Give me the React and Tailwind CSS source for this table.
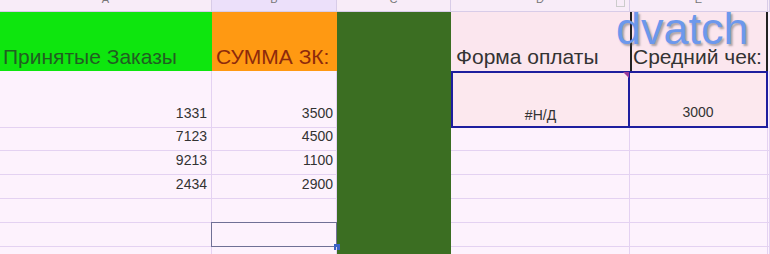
const COLS = ['w-[212px]', 'w-[125px]', 'w-[114px]', 'w-[179px]', 'w-[138px]', 'flex-1'];

const numbers = [
  ['1331', '3500'],
  ['7123', '4500'],
  ['9213', '1100'],
  ['2434', '2900'],
];

const Cell = ({ className = '', children }) => (
  <div className={`flex shrink-0 items-end border-b border-r border-[#e4d2f2] ${className}`}>{children}</div>
);

const PlainRow = ({ height, a, b, selected }) => (
  <div className={`flex ${height}`}>
    <Cell className={`${COLS[0]} justify-end pb-[3px] pr-[4px] text-[14px] text-[#333]`}>{a}</Cell>
    <Cell className={`${COLS[1]} relative justify-end pb-[3px] pr-[3px] text-[14px] text-[#333]`}>
      {b}
      {selected && (
        <>
          <div className="absolute inset-[-1px] border-[1.5px] border-[#707096]" />
          <div className="absolute bottom-[-4px] right-[-4px] h-[6px] w-[6px] bg-[#3b62c4]" />
        </>
      )}
    </Cell>
    <div className={`${COLS[2]} shrink-0 bg-[#3b6e22]`} />
    <Cell className={COLS[3]} />
    <Cell className={COLS[4]} />
    <Cell className={COLS[5]} />
  </div>
);

export default function App() {
  return (
    <div
      className="relative h-[254px] w-[770px] overflow-hidden bg-[#fdf2fd]"
      style={{ fontFamily: '"Liberation Sans", Arial, sans-serif' }}
    >
      {/* column letters, cut off at the top */}
      <div className="flex h-[12px] border-b border-[#d8cce8] text-[11px] leading-none text-[#777]">
        {['A', 'B', 'C', 'D', 'E', ''].map((l, i) => (
          <div
            key={i}
            className={`${COLS[i]} relative shrink-0 border-r border-[#d8cce8] ${i === 1 ? 'bg-[#ece0fa]' : 'bg-[#f8ecf8]'}`}
          >
            <span className="absolute left-1/2 top-[-6px] -translate-x-1/2">{l}</span>
            {i === 3 && <span className="absolute right-[4px] top-[-2px] h-[9px] w-[9px] border border-[#ccc]" />}
          </div>
        ))}
      </div>

      {/* header row */}
      <div className="flex h-[59px] text-[21px] leading-none">
        <div className={`${COLS[0]} flex shrink-0 items-end whitespace-nowrap bg-[#0ee60e] pb-[4px] pl-[3px] text-[#215e21]`}>
          Принятые Заказы
        </div>
        <div className={`${COLS[1]} flex shrink-0 items-end whitespace-nowrap bg-[#ff9912] pb-[4px] pl-[4px] text-[#8d2a0c]`}>
          СУММА ЗК:
        </div>
        <div className={`${COLS[2]} shrink-0 bg-[#3b6e22]`} />
        <div className={`${COLS[3]} flex shrink-0 items-end whitespace-nowrap bg-[#fbe6ee] pb-[4px] pl-[5px] text-[#333]`}>
          Форма оплаты
        </div>
        <div className={`${COLS[4]} flex shrink-0 items-end overflow-hidden whitespace-nowrap border-l-2 border-r-2 border-[#222] bg-[#fbe6ee] pb-[4px] pl-[1px] text-[#333]`}>
          Средний чек:
        </div>
        <div className="flex-1 bg-[#fdf2fd]" />
      </div>

      {/* value row */}
      <div className="flex h-[57px]">
        <Cell className={`${COLS[0]} justify-end pb-[3px] pr-[4px] text-[14px] text-[#333]`}>1331</Cell>
        <Cell className={`${COLS[1]} justify-end pb-[3px] pr-[3px] text-[14px] text-[#333]`}>3500</Cell>
        <div className={`${COLS[2]} shrink-0 bg-[#3b6e22]`} />
        <div className={`${COLS[3]} relative flex shrink-0 items-end justify-center border-2 border-[#1e1e9e] bg-[#fce8ee] pb-[0px] text-[14px] text-[#333]`}>
          #Н/Д
          <span className="absolute right-[-1px] top-[-1px] h-0 w-0 border-l-[6px] border-t-[6px] border-l-transparent border-t-[#9a3a9a]" />
        </div>
        <div className={`${COLS[4]} flex shrink-0 items-end justify-center border-y-2 border-r-2 border-[#1e1e9e] bg-[#fce8ee] pb-[3px] text-[14px] text-[#333]`}>
          3000
        </div>
        <Cell className={COLS[5]} />
      </div>

      <PlainRow height="h-[23px]" a={numbers[1][0]} b={numbers[1][1]} />
      <PlainRow height="h-[24px]" a={numbers[2][0]} b={numbers[2][1]} />
      <PlainRow height="h-[24px]" a={numbers[3][0]} b={numbers[3][1]} />
      <PlainRow height="h-[24px]" />
      <PlainRow height="h-[24px]" selected />
      <PlainRow height="h-[24px]" />

      {/* watermark */}
      <div
        className="absolute left-[616px] top-[6px] text-[45px] leading-none text-[#6c98ec]"
        style={{ textShadow: '2px 2px 2px rgba(80,80,80,0.45)' }}
      >
        dvatch
      </div>
    </div>
  );
}
